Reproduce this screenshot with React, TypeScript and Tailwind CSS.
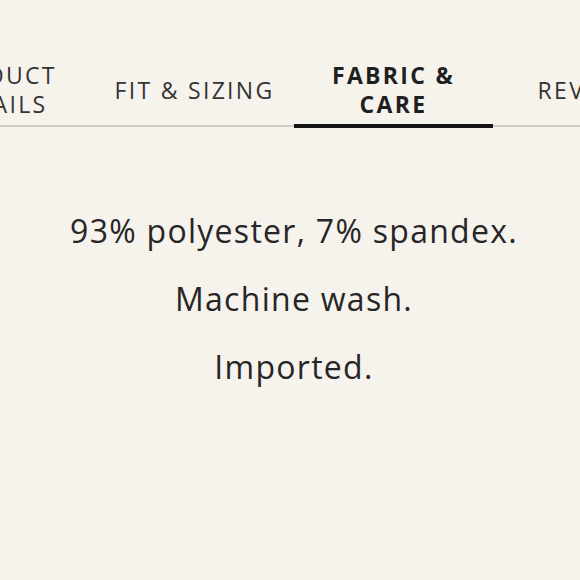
import React from 'react';

const tabs = [
  { label: 'PRODUCT DETAILS', lines: ['PRODUCT', 'DETAILS'] },
  { label: 'FIT & SIZING', lines: ['FIT & SIZING'] },
  { label: 'FABRIC & CARE', lines: ['FABRIC &', 'CARE'] },
  { label: 'REVIEWS', lines: ['REVIEWS'] },
];

const careLines = ['93% polyester, 7% spandex.', 'Machine wash.', 'Imported.'];

export default function App() {
  const active = 'FABRIC & CARE';

  return (
    <div className="min-h-[580px] bg-[#f6f3ec] text-[#262626] font-['Open_Sans',sans-serif] overflow-hidden">
      <div className="pt-[55px]">
        <div className="flex border-b-2 border-[#cfccc5]">
          <div className="flex shrink-0 ml-[-104px]">
            {tabs.map((tab) => {
              const isActive = tab.label === active;
              return (
                <button
                  key={tab.label}
                  className={`relative w-[199px] h-[70px] shrink-0 flex flex-col items-center justify-center text-[23px] leading-[29px] tracking-[0.1em] ${
                    isActive ? 'font-bold text-[#1f1f1f]' : 'font-normal text-[#333]'
                  }`}
                >
                  {tab.lines.map((line) => (
                    <span key={line} className="whitespace-nowrap">
                      {line}
                    </span>
                  ))}
                  {isActive && (
                    <span className="absolute left-0 right-0 -bottom-[3px] h-[4px] bg-[#141414]" />
                  )}
                </button>
              );
            })}
          </div>
        </div>
      </div>

      <div className="pt-[83px] pl-[8px] flex flex-col items-center">
        {careLines.map((line) => (
          <p key={line} className="text-[32px] leading-[42px] mb-[26px] tracking-[0.04em]">
            {line}
          </p>
        ))}
      </div>
    </div>
  );
}
